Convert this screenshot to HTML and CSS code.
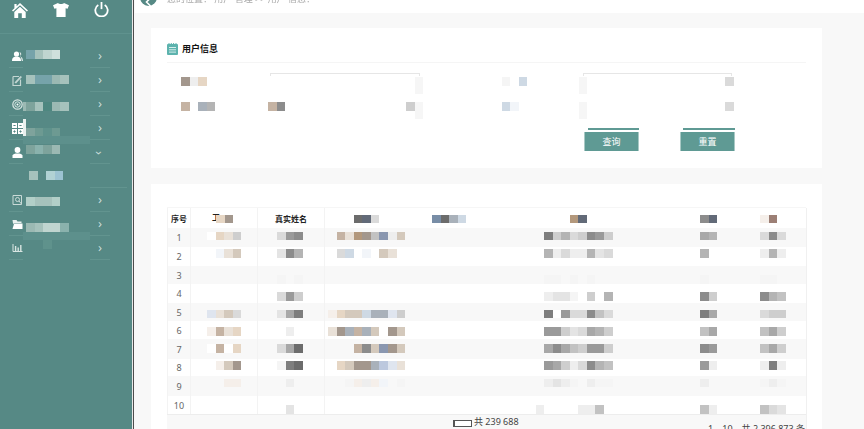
FILE: index.html
```html
<!DOCTYPE html>
<html lang="zh">

<head>
    <meta charset="utf-8">
    <meta name="viewport" content="width=device-width, initial-scale=1.0">
    <title>用户信息</title>
    <link rel="stylesheet" href="styles.css">
</head>

<body>
    <aside class="side">
        <div class="side-top">
            <svg class="top-ico" width="16" height="15" viewBox="0 0 16 15"><path d="M8 0 L16 7.4 L14.9 8.6 L8 2.3 L1.1 8.6 L0 7.4 L2.4 5.2 V1 H4.6 V3.2 Z" fill="#fff"/><path d="M8 3.7 L13.7 8.9 V15 H9.8 V10.2 H6.2 V15 H2.3 V8.9 Z" fill="#fff"/></svg>
            <svg class="top-ico" width="16" height="14" viewBox="0 0 16 14"><path d="M5 0 C6 1.4 10 1.4 11 0 L16 2.2 L14.6 5.8 L12.6 5.2 V14 H3.4 V5.2 L1.4 5.8 L0 2.2 Z" fill="#fff"/></svg>
            <svg class="top-ico top-power" width="15" height="15" viewBox="0 0 16 16"><path d="M4.6 3.2 A6.6 6.6 0 1 0 11.4 3.2" fill="none" stroke="#fff" stroke-width="1.9"/><path d="M8 0 V7.6" stroke="#fff" stroke-width="1.9"/></svg>
        </div>

        <nav class="side-nav">
            <div class="item">
                <svg class="ico" width="11" height="10" viewBox="0 0 11 10"><circle cx="4.5" cy="3" r="2.6" fill="#fff"/><path d="M0 10 C0 6.5 2 5.6 4.5 5.6 C7 5.6 9 6.5 9 10 Z" fill="#fff"/><path d="M7.6 1 A2.4 2.4 0 0 1 8 5.4 C9.8 5.8 11 7 11 10 H9.8" fill="#dfe9e7"/></svg>
                <div class="mos lv6"><i class="s10"></i><i class="s6"></i><i class="s8"></i><i class="s9"></i></div>
                <span class="arrow">›</span>
            </div>
            <div class="item">
                <svg class="ico" width="10" height="11" viewBox="0 0 10 11"><path d="M0.5 1.5 H6.5 M0.5 1.5 V10.5 H8 V4.5" fill="none" stroke="#c3d6d2" stroke-width="1.2"/><path d="M2 7.5 L8 1 L9.5 2 L3.5 8.5 Z M2 5 H5 M2 9.5 H6" fill="#c3d6d2"/></svg>
                <div class="mos lv7"><i class="s6"></i><i class="s10"></i><i class="s10"></i><i class="s5"></i><i class="s6"></i></div>
                <span class="arrow">›</span>
            </div>
            <div class="item">
                <svg class="ico" width="11" height="11" viewBox="0 0 11 11"><circle cx="5.5" cy="5.5" r="4.7" fill="none" stroke="#d8e5e2" stroke-width="1.2"/><circle cx="5.5" cy="5.5" r="2.7" fill="none" stroke="#d8e5e2" stroke-width="1"/><circle cx="5.5" cy="5.5" r="1" fill="#fff"/></svg>
                <div class="mos lv10 tuck"><i class="thin s5"></i><i class="s3"></i><i class="s6"></i><i class="s0"></i><i class="s5"></i><i class="s6"></i></div>
                <span class="arrow">›</span>
            </div>
            <div class="item">
                <svg class="ico" width="11" height="11" viewBox="0 0 11 11"><path d="M0 0 H5 V5 H0 Z M6 0 H11 V5 H6 Z M0 6 H5 V11 H0 Z M6 6 H11 V11 H6 Z" fill="#fff"/><path d="M1.4 2.5 H3.6 M7.4 2.5 H9.6 M1.4 8.5 H3.6 M7.4 8.5 H9.6 M2.5 7.4 V9.6 M8.5 7.4 V9.6" stroke="#568985"/></svg>
                <div class="mos lv12"><i class="s3"></i><i class="s2"></i><i class="s1"></i><i class="s2"></i></div>
                <span class="blot blot-bar"></span>
                <span class="blot blot-band"></span>
                <span class="arrow">›</span>
            </div>
            <div class="item">
                <svg class="ico" width="10" height="11" viewBox="0 0 10 11"><circle cx="5" cy="3" r="2.9" fill="#fff"/><path d="M0 11 V8.6 C0 7 2.5 6.4 5 6.4 C7.5 6.4 10 7 10 8.6 V11 Z" fill="#fff"/></svg>
                <div class="mos lv5"><i class="s3"></i><i class="s4"></i><i class="s3"></i><i class="s5"></i></div>
                <span class="arrow arrow-down">›</span>
            </div>
            <div class="item item-sub">
                <div class="mos lv7"><i class="s6"></i><i></i><i class="s11"></i><i class="s12"></i></div>
            </div>
            <div class="item">
                <svg class="ico" width="10" height="10" viewBox="0 0 10 10"><path d="M0.5 0.5 H9 V9.5 H0.5 Z" fill="none" stroke="#c9dad7"/><circle cx="5" cy="4.5" r="2" fill="none" stroke="#c9dad7"/><path d="M6.5 6 L9 9" stroke="#c9dad7"/></svg>
                <div class="mos lv9"><i class="s7"></i><i class="s6"></i><i class="s6"></i><i class="s7"></i></div>
                <span class="arrow">›</span>
            </div>
            <div class="item">
                <svg class="ico" width="10" height="9" viewBox="0 0 10 9"><path d="M0 0 H4 L5 1.4 H9 V3 H2 L0.6 4 Z" fill="#eaf1f0"/><path d="M0 9 L1.6 3.6 H10 V9 Z" fill="#fff"/></svg>
                <div class="mos lv11"><i class="s5"></i><i class="s6"></i><i class="s8"></i><i class="s8"></i><i class="s4"></i></div>
                <span class="blot blot-band"></span>
                <span class="arrow">›</span>
            </div>
            <div class="item">
                <svg class="ico" width="10" height="8" viewBox="0 0 10 8"><path d="M0.5 0 V7.5 H10" fill="none" stroke="#d8e5e2"/><path d="M2.4 2 H3.8 V7 H2.4 Z M5 3.6 H6.4 V7 H5 Z M7.6 1 H9 V7 H7.6 Z" fill="#d8e5e2"/></svg>
                <div class="mos lv4"><i></i><i></i><i class="s1"></i></div>
                <span class="arrow">›</span>
            </div>
        </nav>
    </aside>

    <main class="main">
        <div class="topbar">
            <span class="back">
                <svg width="18" height="18" viewBox="0 0 18 18"><path d="M10.5 10 L6.5 14 L10.5 18" fill="none" stroke="#fff" stroke-width="1.6"/></svg>
            </span>
            <span class="crumb">您的位置： 用户 管理 &gt;&gt; 用户 信息：</span>
        </div>

        <div class="page">
            <!--Søgeformular-->
            <section class="card card-form">
                <div class="card-head">
                    <svg width="11" height="12" viewBox="0 0 11 12"><rect x="0" y="1" width="11" height="11" rx="1" fill="#5db3ae"/><path d="M2 0 V2 M4.3 0 V2 M6.6 0 V2 M9 0 V2" stroke="#5db3ae"/><path d="M2 4.5 H9 M2 6.8 H9 M2 9.1 H9" stroke="#d7eeec"/></svg>
                    <h2>用户信息</h2>
                </div>

                <div class="form">
                    <div class="f-label">
                        <div class="mos"><i class="t7"></i><i class="g2"></i><i class="t3"></i></div>
                    </div>
                    <div class="fld">
                        <div class="line"></div>
                        <div class="fld-row">
                            <span class="blur"></span>
                        </div>
                    </div>
                    <div class="f-label f-label-b">
                        <div class="mos"><i></i><i class="g1"></i><i></i><i class="b3"></i></div>
                    </div>
                    <div class="fld fld-right">
                        <div class="line"></div>
                        <div class="fld-row">
                            <span class="blur"></span>
                            <div class="mos"><i class="g4"></i></div>
                        </div>
                    </div>

                    <div class="f-label f-label-2">
                        <div class="mos"><i class="t5"></i><i></i><i class="b5"></i><i class="g7"></i></div>
                    </div>
                    <div class="fld">
                        <div class="fld-row fld-row-2">
                            <div class="mos"><i class="t5"></i><i class="g10"></i></div>
                            <div class="fld-end">
                                <div class="mos"><i class="g5"></i></div>
                                <span class="blur"></span>
                            </div>
                        </div>
                    </div>
                    <div class="f-label f-label-b f-label-2">
                        <div class="mos"><i></i><i class="b3"></i><i class="b1"></i></div>
                    </div>
                    <div class="fld fld-right">
                        <div class="fld-row fld-row-2">
                            <span class="blur"></span>
                            <div class="mos"><i class="g4"></i></div>
                        </div>
                    </div>

                    <div class="btns">
                        <div class="btn-wrap">
                            <div class="btn-line"></div>
                            <button class="btn">查询</button>
                        </div>
                        <div class="btn-wrap btn-wrap-2">
                            <div class="btn-line"></div>
                            <button class="btn">重置</button>
                        </div>
                    </div>
                </div>
            </section>

            <!--Tabel-->
            <section class="card card-table">
                <div class="tbl">
                    <div class="row r0">
                        <div class="c1 th">序号</div>
                        <div class="c2 th th-2"><span>工</span><div class="mos"><i class="t3"></i><i class="t7"></i></div></div>
                        <div class="c3 th">真实姓名</div>
                        <div class="c4"><div class="mos"><i></i><i></i><i></i><i class="g12"></i><i class="b7"></i><i class="g4"></i></div></div>
                        <div class="c5"><div class="mos"><i class="b8"></i><i class="g12"></i><i class="b5"></i><i class="b3"></i></div></div>
                        <div class="c6"><div class="mos"><i></i><i></i><i></i><i></i><i class="t6"></i><i class="b7"></i></div></div>
                        <div class="c7"><div class="mos"><i class="g10"></i><i class="b7"></i></div></div>
                        <div class="c8"><div class="mos"><i class="t1"></i><i class="t8"></i></div></div>
                    </div>

                    <div class="row r1 shade">
                        <div class="c1 num">1</div>
                        <div class="c2"><div class="mos"><i class="w"></i><i class="t3"></i><i class="t2"></i><i class="g5"></i></div></div>
                        <div class="c3"><div class="mos"><i class="g4"></i><i class="g9"></i><i class="g10"></i></div></div>
                        <div class="c4"><div class="mos"><i></i><i class="t5"></i><i class="t2"></i><i class="t6"></i><i class="t7"></i><i class="g6"></i><i class="b6"></i><i class="g2"></i><i class="t4"></i></div></div>
                        <div class="c5"></div>
                        <div class="c6"><div class="mos"><i></i><i class="g11"></i><i class="g5"></i><i class="g7"></i><i class="g4"></i><i class="g5"></i><i class="g10"></i><i class="g9"></i><i class="g5"></i></div></div>
                        <div class="c7"><div class="mos"><i class="g8"></i><i class="g7"></i></div></div>
                        <div class="c8"><div class="mos"><i class="g4"></i><i class="g10"></i><i class="g4"></i></div></div>
                    </div>
                    <div class="row r2">
                        <div class="c1 num">2</div>
                        <div class="c2"><div class="mos"><i></i><i class="b1"></i><i class="t2"></i><i class="t4"></i></div></div>
                        <div class="c3"><div class="mos"><i class="g3"></i><i class="g10"></i><i class="g7"></i></div></div>
                        <div class="c4"><div class="mos"><i></i><i class="g4"></i><i class="b3"></i><i></i><i class="b1"></i><i></i><i class="t4"></i><i class="t2"></i></div></div>
                        <div class="c5"></div>
                        <div class="c6"><div class="mos"><i></i><i class="g7"></i><i class="g2"></i><i class="g4"></i><i class="g2"></i><i class="g2"></i><i class="g7"></i><i class="g3"></i><i class="g4"></i></div></div>
                        <div class="c7"><div class="mos"><i class="g7"></i></div></div>
                        <div class="c8"><div class="mos"><i class="g2"></i><i class="g7"></i><i class="g2"></i></div></div>
                    </div>
                    <div class="row r3 shade">
                        <div class="c1 num">3</div>
                        <div class="c2"></div>
                        <div class="c3"><div class="mos"><i class="g1"></i><i></i><i class="g1"></i></div></div>
                        <div class="c4"></div>
                        <div class="c5"></div>
                        <div class="c6"><div class="mos"><i></i><i class="g1"></i><i class="g1"></i><i></i><i class="g1"></i><i></i><i class="g1"></i></div></div>
                        <div class="c7"><div class="mos"><i class="g1"></i></div></div>
                        <div class="c8"><div class="mos"><i class="g1"></i><i class="g1"></i></div></div>
                    </div>
                    <div class="row r4">
                        <div class="c1 num">4</div>
                        <div class="c2"></div>
                        <div class="c3"><div class="mos"><i class="g4"></i><i class="g9"></i><i class="g5"></i></div></div>
                        <div class="c4"></div>
                        <div class="c5"></div>
                        <div class="c6"><div class="mos"><i></i><i class="g2"></i><i class="g3"></i><i class="g3"></i><i class="g1"></i><i></i><i class="g5"></i><i></i><i class="g7"></i></div></div>
                        <div class="c7"><div class="mos"><i class="g10"></i><i class="g5"></i></div></div>
                        <div class="c8"><div class="mos"><i class="g10"></i><i class="g7"></i><i class="g6"></i></div></div>
                    </div>
                    <div class="row r5 shade">
                        <div class="c1 num">5</div>
                        <div class="c2"><div class="mos"><i class="b2"></i><i class="t2"></i><i class="t4"></i><i class="g4"></i></div></div>
                        <div class="c3"><div class="mos"><i class="g3"></i><i class="g8"></i><i class="g11"></i></div></div>
                        <div class="c4"><div class="mos"><i class="t1"></i><i class="t3"></i><i class="t4"></i><i class="t4"></i><i class="b3"></i><i class="b5"></i><i class="b5"></i><i class="b2"></i><i class="g5"></i></div></div>
                        <div class="c5"></div>
                        <div class="c6"><div class="mos"><i></i><i class="g11"></i><i class="w"></i><i class="g9"></i><i class="g4"></i><i class="g4"></i><i class="g10"></i><i class="g6"></i><i class="g4"></i></div></div>
                        <div class="c7"><div class="mos"><i class="g11"></i><i class="g8"></i></div></div>
                        <div class="c8"><div class="mos"><i class="g4"></i><i class="g5"></i><i class="g5"></i></div></div>
                    </div>
                    <div class="row r6">
                        <div class="c1 num">6</div>
                        <div class="c2"><div class="mos"><i class="t1"></i><i class="t5"></i><i class="t2"></i><i class="t3"></i></div></div>
                        <div class="c3"><div class="mos"><i></i><i class="g2"></i></div></div>
                        <div class="c4"><div class="mos"><i class="t2"></i><i class="t7"></i><i class="b5"></i><i class="t5"></i><i class="b5"></i><i class="t4"></i><i></i><i class="t7"></i><i class="t4"></i></div></div>
                        <div class="c5"></div>
                        <div class="c6"><div class="mos"><i></i><i class="g9"></i><i class="g9"></i><i class="g5"></i><i class="g3"></i><i class="g4"></i><i class="g8"></i><i class="g7"></i><i class="g5"></i></div></div>
                        <div class="c7"><div class="mos"><i class="g6"></i><i class="g8"></i></div></div>
                        <div class="c8"><div class="mos"><i class="g6"></i><i class="g8"></i><i class="g5"></i></div></div>
                    </div>
                    <div class="row r7 shade">
                        <div class="c1 num">7</div>
                        <div class="c2"><div class="mos"><i class="w"></i><i class="t5"></i><i class="w"></i><i class="t3"></i></div></div>
                        <div class="c3"><div class="mos"><i class="g4"></i><i class="g8"></i><i class="g12"></i></div></div>
                        <div class="c4"><div class="mos"><i></i><i></i><i></i><i class="t5"></i><i class="g10"></i><i class="t4"></i><i class="b6"></i><i class="t7"></i><i class="t4"></i></div></div>
                        <div class="c5"></div>
                        <div class="c6"><div class="mos"><i></i><i class="g8"></i><i class="g10"></i><i class="g8"></i><i class="g6"></i><i class="g5"></i><i class="g9"></i><i class="g9"></i><i class="g5"></i></div></div>
                        <div class="c7"><div class="mos"><i class="g10"></i><i class="g9"></i></div></div>
                        <div class="c8"><div class="mos"><i class="g6"></i><i class="g8"></i><i class="g5"></i></div></div>
                    </div>
                    <div class="row r8">
                        <div class="c1 num">8</div>
                        <div class="c2"><div class="mos"><i></i><i class="t1"></i><i class="t4"></i><i class="t7"></i></div></div>
                        <div class="c3"><div class="mos"><i class="g1"></i><i class="g11"></i><i class="g12"></i></div></div>
                        <div class="c4"><div class="mos"><i></i><i class="t3"></i><i class="t4"></i><i class="t7"></i><i class="t7"></i><i class="b5"></i><i class="b4"></i><i class="b2"></i><i class="t2"></i></div></div>
                        <div class="c5"></div>
                        <div class="c6"><div class="mos"><i></i><i class="g9"></i><i class="g8"></i><i class="g5"></i><i class="g2"></i><i class="g4"></i><i class="g10"></i><i class="g7"></i><i class="g6"></i></div></div>
                        <div class="c7"><div class="mos"><i class="g9"></i><i class="g2"></i></div></div>
                        <div class="c8"><div class="mos"><i class="g2"></i><i class="g11"></i><i class="g2"></i></div></div>
                    </div>
                    <div class="row r9 shade">
                        <div class="c1 num">9</div>
                        <div class="c2"><div class="mos"><i></i><i></i><i class="t1"></i><i class="t1"></i></div></div>
                        <div class="c3"><div class="mos"><i></i><i class="g2"></i></div></div>
                        <div class="c4"><div class="mos"><i></i><i></i><i class="g1"></i><i class="t1"></i><i class="g2"></i><i class="t1"></i><i class="b1"></i><i></i><i class="g1"></i></div></div>
                        <div class="c5"></div>
                        <div class="c6"><div class="mos"><i></i><i class="g2"></i><i class="g3"></i><i class="g2"></i><i class="g1"></i><i></i><i class="g2"></i><i class="g1"></i><i class="g1"></i></div></div>
                        <div class="c7"><div class="mos"><i class="g2"></i></div></div>
                        <div class="c8"><div class="mos"><i class="g1"></i><i class="g2"></i><i class="g1"></i></div></div>
                    </div>
                    <div class="row r10">
                        <div class="c1 num">10</div>
                        <div class="c2"></div>
                        <div class="c3"><div class="mos"><i></i><i class="g3"></i></div></div>
                        <div class="c4"></div>
                        <div class="c5"></div>
                        <div class="c6"><div class="mos"><i class="g2"></i><i></i><i></i><i></i><i></i><i class="g2"></i><i class="g2"></i><i class="g6"></i></div></div>
                        <div class="c7"><div class="mos"><i class="g6"></i><i class="g2"></i></div></div>
                        <div class="c8"><div class="mos"><i class="g6"></i><i class="g4"></i><i class="g3"></i></div></div>
                    </div>

                    <div class="tbl-foot">
                        <span class="pg pg-off">« ‹</span>
                        <span class="pg-input"></span>
                        <span class="pg-total">共 239 688</span>
                        <span class="pg pg-on">› »</span>
                        <span class="pg-count">1 – 10，共 2 396 873 条</span>
                    </div>
                </div>
            </section>
        </div>
    </main>
</body>

</html>
```

FILE: styles.css
```css
html,
body {
    height: 429px;
    overflow: hidden;
}

body {
    margin: 0;
    display: flex;
    background-color: #f8f8f8;
    font-family: "Noto Sans", "Noto Sans CJK SC", sans-serif;
}

/* SIDEBAR */

.side {
    width: 134px;
    flex: none;
    background: linear-gradient(to right, #568985 132px, #e9e9e9 132px, #e9e9e9 133px, #4d4d4d 133px);
}

.side-top {
    width: 132px;
    height: 34px;
    box-sizing: border-box;
    padding: 3px 0 0 12px;
    display: flex;
    align-items: flex-start;
    gap: 25px;
    border-bottom: 1px solid #5f928e;
}

.top-power {
    margin-top: -1px;
}

.side-nav {
    margin: 10px 0 0 9px;
    width: 101px;
}

.item {
    position: relative;
    height: 24px;
    box-sizing: border-box;
    padding-left: 3px;
    display: flex;
    align-items: center;
    background: linear-gradient(to right, #62948f 14px, transparent 14px, transparent 81px, #62948f 81px) bottom / 100% 1px no-repeat;
}

.item-sub {
    width: 118px;
    padding-left: 17px;
    background: linear-gradient(to right, transparent 81px, #62948f 81px) bottom / 100% 1px no-repeat;
}

.ico {
    width: 11px;
    flex: none;
}

.item > .mos {
    align-self: flex-start;
    margin-left: 3px;
}

.item > .tuck {
    margin-left: 0;
}

.mos .thin {
    width: 3px;
}

.item > .lv4 { margin-top: 4px; }
.item > .lv5 { margin-top: 5px; }
.item > .lv6 { margin-top: 6px; }
.item > .lv7 { margin-top: 7px; }
.item > .lv9 { margin-top: 9px; }
.item > .lv10 { margin-top: 10px; }
.item > .lv11 { margin-top: 11px; }
.item > .lv12 { margin-top: 12px; }

.arrow {
    position: absolute;
    left: 89px;
    top: 3px;
    color: #c8dbd8;
    font-size: 13px;
    line-height: 16px;
}

.arrow-down {
    top: 5px;
    transform: rotate(90deg);
}

/* sløring oven på menuen */
.blot {
    position: absolute;
}

.blot-bar {
    left: 14px;
    top: 3px;
    width: 3px;
    height: 18px;
    background-color: #e8f0ee;
}

.blot-band {
    left: 14px;
    top: 20px;
    width: 67px;
    height: 8px;
    background-color: #5d908c;
    z-index: 1;
}

/* MOSAIC */

.mos {
    display: flex;
    height: 9px;
}

.mos i {
    width: 8.57px;
    flex: none;
}

.w { background-color: #fff; }

.g1 { background-color: #f5f5f5; }
.g2 { background-color: #eeeeee; }
.g3 { background-color: #e4e4e4; }
.g4 { background-color: #dadada; }
.g5 { background-color: #cecece; }
.g6 { background-color: #c2c2c2; }
.g7 { background-color: #b4b4b4; }
.g8 { background-color: #a8a8a8; }
.g9 { background-color: #9a9a9a; }
.g10 { background-color: #8c8c8c; }
.g11 { background-color: #7e7e7e; }
.g12 { background-color: #6c6c6c; }

.t1 { background-color: #f5efea; }
.t2 { background-color: #e9e1d8; }
.t3 { background-color: #e6d6c4; }
.t4 { background-color: #d4c9bc; }
.t5 { background-color: #c5b3a3; }
.t6 { background-color: #b3987c; }
.t7 { background-color: #a3978d; }
.t8 { background-color: #9c7f75; }

.b1 { background-color: #f2f5f9; }
.b2 { background-color: #dfe5ef; }
.b3 { background-color: #ced9e4; }
.b4 { background-color: #bcc8de; }
.b5 { background-color: #a9b1ba; }
.b6 { background-color: #8a97b0; }
.b7 { background-color: #626a78; }
.b8 { background-color: #788da6; }

.s0 { background-color: #4e8780; }
.s1 { background-color: #5f928c; }
.s2 { background-color: #6d9a92; }
.s3 { background-color: #7ea39c; }
.s4 { background-color: #8ab2ad; }
.s5 { background-color: #9bb9b3; }
.s6 { background-color: #a6c2bc; }
.s7 { background-color: #b2cfc8; }
.s8 { background-color: #c0d5d0; }
.s9 { background-color: #cfe0dc; }
.s10 { background-color: #76a3aa; }
.s11 { background-color: #b1d2d4; }
.s12 { background-color: #9cc3d2; }

/* MAIN */

.main {
    flex: 1;
    min-width: 0;
}

.topbar {
    height: 13px;
    margin-left: 1px;
    padding-left: 5px;
    display: flex;
    align-items: flex-start;
    overflow: hidden;
    background-color: #fff;
}

.back {
    width: 17px;
    height: 18px;
    margin-top: -12px;
    border-radius: 50%;
    background-color: #568985;
    flex: none;
}

.crumb {
    margin: -7px 0 0 10px;
    font-size: 9px;
    line-height: 12px;
    color: #a9a9a9;
    filter: blur(.4px);
}

.page {
    padding: 15px 42px 0 17px;
}

.card {
    background-color: #fff;
    padding: 0 16px;
}

/* SØGEFORMULAR */

.card-form {
    height: 140px;
    margin-bottom: 16px;
    box-sizing: border-box;
    padding-top: 1px;
}

.card-head {
    height: 34px;
    padding-top: 6px;
    box-sizing: border-box;
    border-bottom: 1px solid #f5f5f5;
    display: flex;
    align-items: center;
    gap: 4px;
}

h2 {
    margin: 0;
    font-size: 9px;
    line-height: 12px;
    color: #111;
    font-weight: 700;
}

.form {
    display: grid;
    grid-template-columns: 101px 225px 86px 227px;
    grid-template-rows: 29px 26px auto;
    margin-top: 10px;
}

.f-label {
    padding: 4px 0 0 14px;
}

.f-label-b {
    padding-left: 0;
}

.f-label-2 {
    padding-top: 0;
}

.fld {
    width: 155px;
}

.line {
    height: 2px;
    margin: 0 3px 0 2px;
    border: 1px solid #e6e6e6;
    border-bottom: none;
}

.fld-right .line {
    margin: 0 2px 0 4px;
}

.fld-row {
    display: flex;
    justify-content: flex-end;
    margin-top: 1px;
}

.fld-right .fld-row,
.fld-row-2 {
    justify-content: space-between;
}

.fld-row-2 {
    margin-top: 0;
}

.fld-end {
    display: flex;
}

.blur {
    width: 8px;
    height: 17px;
    background-color: #f6f6f6;
}

.btns {
    grid-column: 4;
    display: flex;
    padding-left: 5px;
    gap: 41px;
}

.btn-wrap {
    width: 55px;
}

.btn-line {
    height: 2px;
    margin: 0 0 2px 4px;
    background-color: #5f9a94;
}

.btn-wrap-2 .btn-line {
    margin-left: 3px;
}

.btn {
    display: block;
    width: 55px;
    height: 19px;
    padding: 0;
    border: none;
    border-left: 1px solid #a9c9c5;
    border-right: 1px solid #a9c9c5;
    background-color: #5f9a94;
    color: #fff;
    font-family: "Noto Sans CJK SC", sans-serif;
    font-size: 9px;
}

/* TABEL */

.card-table {
    height: 260px;
    padding-top: 24px;
    box-sizing: border-box;
}

.tbl {
    width: 639px;
    box-shadow: 1px 0 0 #f0f0f0, 0 -1px 0 #f6f6f6;
}

.row {
    display: grid;
    grid-template-columns: 24px 67px 67px 95px 90px 170px 60px 66px;
}

.shade {
    background-color: #f8f8f8;
}

.c1,
.c2,
.c3 {
    border-right: 1px solid #f3f3f3;
}

.c1 {
    border-left: 1px solid #f3f3f3;
}

.c2 { padding-left: 16px; }
.c3 { padding-left: 19px; }
.c4 { padding-left: 3px; }
.c5 { padding-left: 12px; }
.c6 { padding-left: 25.5px; }
.c7 { padding-left: 20px; }
.c8 { padding-left: 20px; }

.th {
    padding: 0;
    font-size: 8px;
    font-weight: 700;
    color: #222;
    text-align: center;
    line-height: 21px;
}

.th-2 {
    display: flex;
    padding: 0 0 0 21px;
    height: 20px;
    overflow: hidden;
}

.th-2 span {
    margin-top: -2px;
}

.th-2 .mos {
    margin: 7px 0 0 -4px;
}

.num {
    font-size: 9px;
    color: #666;
    text-align: center;
    display: flex;
    align-items: center;
    justify-content: center;
}

.r0 { height: 20px; }
.r1 { height: 19px; }
.r2 { height: 19px; }
.r3 { height: 18px; }
.r4 { height: 19px; }
.r5 { height: 18px; }
.r6 { height: 18px; }
.r7 { height: 20px; }
.r8 { height: 17px; }
.r9 { height: 20px; }
.r10 { height: 18px; }

.r0 .mos { margin-top: 7px; height: 8px; }
.r1 .mos { margin-top: 4px; height: 8px; }
.r2 .mos { margin-top: 2px; }
.r3 .mos { margin-top: 9px; }
.r4 .mos { margin-top: 8px; }
.r5 .mos { margin-top: 7px; height: 8px; }
.r6 .mos { margin-top: 6px; }
.r7 .mos { margin-top: 5px; }
.r8 .mos { margin-top: 2px; }
.r9 .mos { margin-top: 3px; height: 8px; }
.r10 .mos { margin-top: 9px; }

.tbl-foot {
    height: 30px;
    background-color: #f8f8f8;
    border-top: 1px solid #ededed;
    border-radius: 0 0 3px 3px;
    display: flex;
    align-items: flex-start;
    font-size: 9px;
    line-height: 14px;
    color: #444;
}

.pg {
    margin-top: 9px;
}

.pg-off {
    margin-left: 264px;
    color: #c9d5de;
    width: 22px;
}

.pg-input {
    width: 16px;
    height: 5px;
    margin-top: 5px;
    background-color: #fff;
    border: 1px solid #555;
    border-left-width: 2px;
}

.pg-total {
    margin-left: 2px;
}

.pg-on {
    margin-left: 9px;
    color: #6ea0cc;
}

.pg-count {
    margin: 7px 0 0 auto;
    padding-right: 1px;
}
```
